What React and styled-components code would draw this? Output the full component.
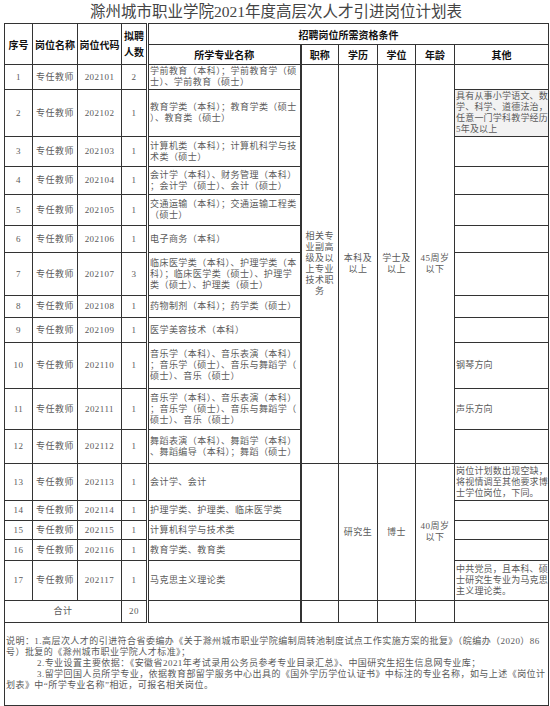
import React from "react";
import styled, { createGlobalStyle } from "styled-components";

const GlobalStyle = createGlobalStyle`
  html, body { margin: 0; padding: 0; background: #fff; }
  body { font-family: "Liberation Serif", "Noto Sans CJK SC", serif; }
`;

const Page = styled.div`
  width: 550px;
  box-sizing: border-box;
  padding: 0 2px 0 4px;
`;

const Title = styled.h1`
  margin: 0;
  height: 23px;
  line-height: 23px;
  text-align: center;
  font-family: "Liberation Serif", "Noto Sans CJK SC", serif;
  font-weight: 400;
  font-size: 15.5px;
  color: #444;
  white-space: nowrap;
`;

const Table = styled.table`
  width: 544px;
  border-collapse: collapse;
  table-layout: fixed;
`;

const Col = styled.col`
  width: ${(p) => p.$w}px;
`;

const Row = styled.tr`
  height: ${(p) => p.$h}px;
`;

const HeadCell = styled.th`
  border: 1px solid #333;
  ${(p) => (p.$major ? "border-left: 3px double #333;" : "")}
  ${(p) => (p.$title ? "border-left: 2px solid #333;" : "")}
  padding: 0;
  font-family: "Noto Sans CJK SC", sans-serif;
  font-weight: 700;
  font-size: 10px;
  line-height: ${(p) => (p.$stack ? "16px" : "11px")};
  color: #111;
  text-align: center;
  vertical-align: middle;
  white-space: nowrap;
`;

const Cell = styled.td`
  border: 1px solid #333;
  ${(p) => (p.$major ? "border-left: 3px double #333;" : "")}
  ${(p) => (p.$title ? "border-left: 2px solid #333;" : "")}
  padding: 0 1px;
  font-size: 9px;
  line-height: 11px;
  letter-spacing: ${(p) => (p.$tight ? "0.2px" : "0.45px")};
  color: #5a5a5a;
  text-align: ${(p) => p.$align || "center"};
  vertical-align: middle;
  white-space: nowrap;
  overflow: hidden;
  background: ${(p) => (p.$gray ? "#f2f2f2" : "#fff")};
`;

const Line = styled.span`
  display: block;
  white-space: nowrap;
`;

const NoteCell = styled.td`
  border: 1px solid #333;
  padding: 13px 2px 0 1px;
  vertical-align: top;
  font-size: 9px;
  line-height: 11px;
  letter-spacing: 0.45px;
  color: #5a5a5a;
`;

const NoteLine = styled.span`
  display: block;
  white-space: nowrap;
  padding-left: ${(p) => (p.$indent ? "31px" : "0")};
`;

const Lines = ({ items }) => items.map((t, i) => <Line key={i}>{t}</Line>);

const rows = [
  { h: 25, n: 2, major: ["学前教育（本科）；学前教育学（硕", "士）、学前教育（硕士）"], other: [] },
  {
    h: 47,
    n: 1,
    major: ["教育学类（本科）；教育学类（硕士", "）、教育类（硕士）"],
    other: ["具有从事小学语文、数", "学、科学、道德法治，", "任意一门学科教学经历", "5年及以上"],
    gray: true,
  },
  { h: 30, n: 1, major: ["计算机类（本科）；计算机科学与技", "术类（硕士）"], other: [] },
  { h: 28, n: 1, major: ["会计学（本科）、财务管理（本科）", "；会计学（硕士）、会计（硕士）"], other: [] },
  { h: 31, n: 1, major: ["交通运输（本科）；交通运输工程类", "（硕士）"], other: [] },
  { h: 27, n: 1, major: ["电子商务（本科）"], other: [] },
  {
    h: 43,
    n: 3,
    major: ["临床医学类（本科）、护理学类（本", "科）；临床医学类（硕士）、护理学", "类（硕士）、护理类（硕士）"],
    other: [],
  },
  { h: 22, n: 1, major: ["药物制剂（本科）；药学类（硕士）"], other: [] },
  { h: 25, n: 1, major: ["医学美容技术（本科）"], other: [] },
  {
    h: 46,
    n: 1,
    major: ["音乐学（本科）、音乐表演（本科）", "；音乐学（硕士）、音乐与舞蹈学（", "硕士）、音乐（硕士）"],
    other: ["钢琴方向"],
  },
  {
    h: 41,
    n: 1,
    major: ["音乐学（本科）、音乐表演（本科）", "；音乐学（硕士）、音乐与舞蹈学（", "硕士）、音乐（硕士）"],
    other: ["声乐方向"],
  },
  { h: 34, n: 1, major: ["舞蹈表演（本科）、舞蹈学（本科）", "、舞蹈编导（本科）；舞蹈（硕士）"], other: [] },
  { h: 37, n: 1, major: ["会计学、会计"], other: ["岗位计划数出现空缺，", "将视情调至其他要求博", "士学位岗位，下同。"] },
  { h: 20, n: 1, major: ["护理学类、护理类、临床医学类"], other: [] },
  { h: 19, n: 1, major: ["计算机科学与技术类"], other: [] },
  { h: 21, n: 1, major: ["教育学类、教育类"], other: [] },
  { h: 40, n: 1, major: ["马克思主义理论类"], other: ["中共党员，且本科、硕", "士研究生专业为马克思", "主义理论类。"] },
];

const widths = [28, 45, 44, 26, 153, 38, 39, 38, 39, 94];

export default function App() {
  return (
    <Page>
      <GlobalStyle />
      <Title>滁州城市职业学院2021年度高层次人才引进岗位计划表</Title>
      <Table>
        <colgroup>
          {widths.map((w, i) => (
            <Col key={i} $w={w} />
          ))}
        </colgroup>
        <thead>
          <Row $h={21}>
            <HeadCell rowSpan={2}>序号</HeadCell>
            <HeadCell rowSpan={2}>岗位名称</HeadCell>
            <HeadCell rowSpan={2}>岗位代码</HeadCell>
            <HeadCell rowSpan={2} $stack>
              <Line>拟聘</Line>
              <Line>人数</Line>
            </HeadCell>
            <HeadCell colSpan={6} $major>
              招聘岗位所需资格条件
            </HeadCell>
          </Row>
          <Row $h={20}>
            <HeadCell $major>所学专业名称</HeadCell>
            <HeadCell $title>职称</HeadCell>
            <HeadCell>学历</HeadCell>
            <HeadCell>学位</HeadCell>
            <HeadCell>年龄</HeadCell>
            <HeadCell>其他</HeadCell>
          </Row>
        </thead>
        <tbody>
          {rows.map((r, i) => (
            <Row key={i} $h={r.h}>
              <Cell>{i + 1}</Cell>
              <Cell>专任教师</Cell>
              <Cell>{202101 + i}</Cell>
              <Cell>{r.n}</Cell>
              <Cell $major $align="left">
                <Lines items={r.major} />
              </Cell>
              {i === 0 && (
                <>
                  <Cell rowSpan={12} $title>
                    <Lines items={["相关专", "业副高", "级及以", "上专业", "技术职", "务"]} />
                  </Cell>
                  <Cell rowSpan={12}>
                    <Lines items={["本科及", "以上"]} />
                  </Cell>
                  <Cell rowSpan={12}>
                    <Lines items={["学士及", "以上"]} />
                  </Cell>
                  <Cell rowSpan={12}>
                    <Lines items={["45周岁", "以下"]} />
                  </Cell>
                </>
              )}
              {i === 12 && (
                <>
                  <Cell rowSpan={5} $title />
                  <Cell rowSpan={5}>研究生</Cell>
                  <Cell rowSpan={5}>博士</Cell>
                  <Cell rowSpan={5}>
                    <Lines items={["40周岁", "以下"]} />
                  </Cell>
                </>
              )}
              <Cell $align="left" $tight $gray={r.gray}>
                <Lines items={r.other} />
              </Cell>
            </Row>
          ))}
          <Row $h={22}>
            <Cell colSpan={3}>合计</Cell>
            <Cell>20</Cell>
            <Cell $major />
            <Cell $title />
            <Cell />
            <Cell />
            <Cell />
            <Cell />
          </Row>
          <Row $h={83}>
            <NoteCell colSpan={10}>
              <NoteLine>
                说明：1.高层次人才的引进符合省委编办《关于滁州城市职业学院编制周转池制度试点工作实施方案的批复》（皖编办（2020）86
              </NoteLine>
              <NoteLine>号）批复的《滁州城市职业学院人才标准》；</NoteLine>
              <NoteLine $indent>
                2.专业设置主要依据：《安徽省2021年考试录用公务员参考专业目录汇总》、中国研究生招生信息网专业库；
              </NoteLine>
              <NoteLine $indent>
                3.留学回国人员所学专业，依据教育部留学服务中心出具的《国外学历学位认证书》中标注的专业名称，如与上述《岗位计
              </NoteLine>
              <NoteLine>划表》中“所学专业名称”相近，可报名相关岗位。</NoteLine>
            </NoteCell>
          </Row>
        </tbody>
      </Table>
    </Page>
  );
}
